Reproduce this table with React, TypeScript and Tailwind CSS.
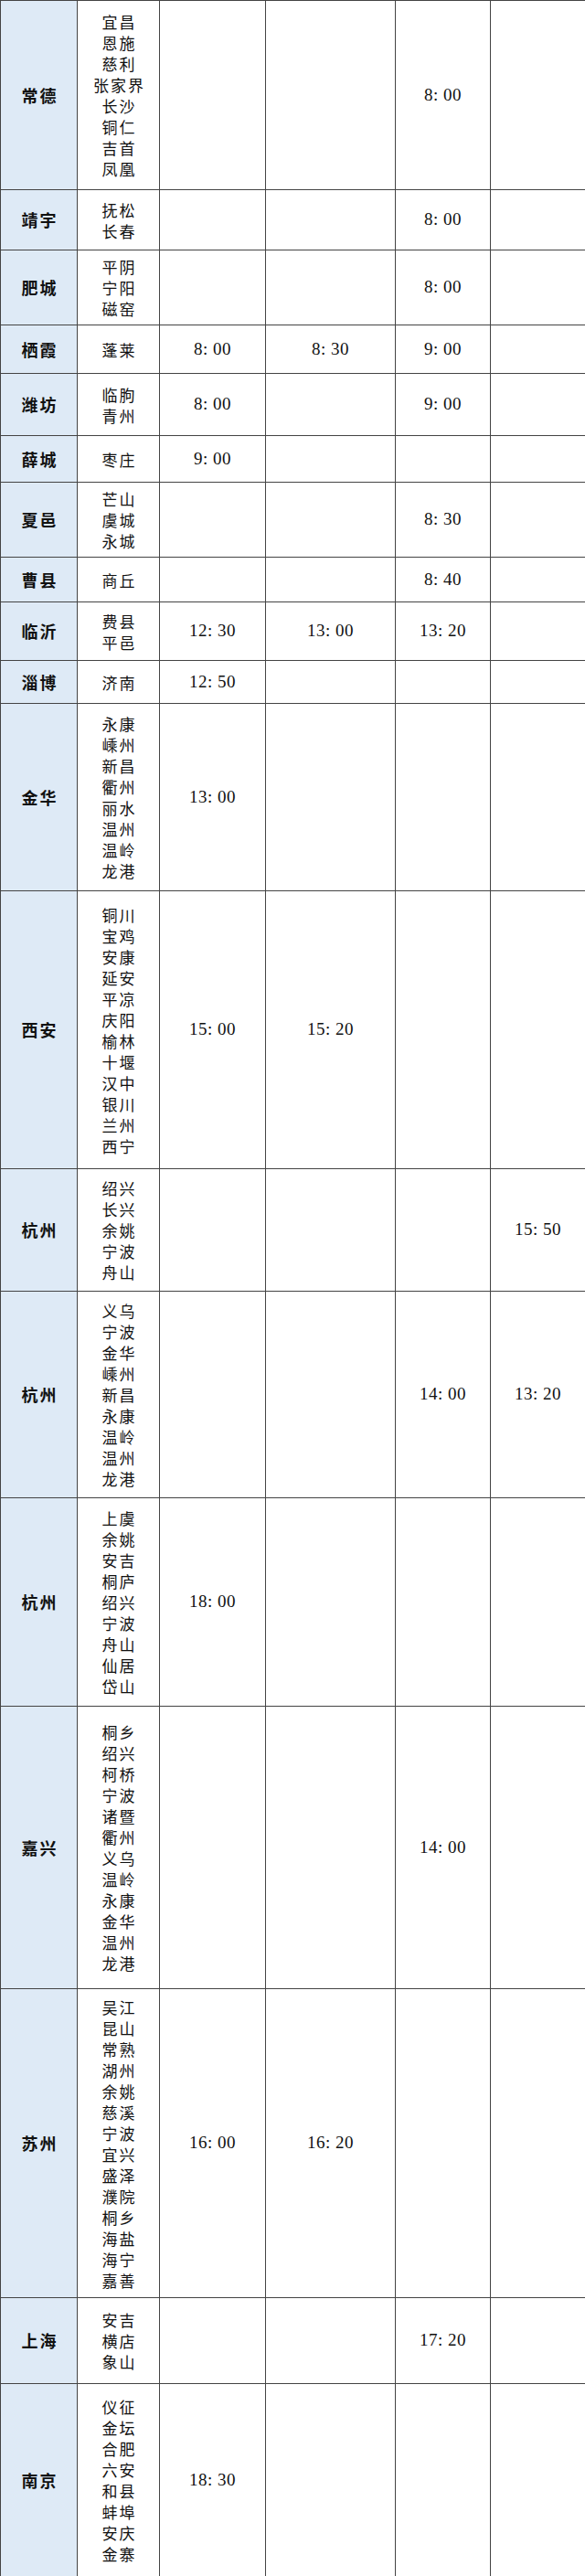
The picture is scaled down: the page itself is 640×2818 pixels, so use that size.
type Row = {
  city: string;
  h: string;
  stops: string[];
  times: [string, string, string, string];
};

const rows: Row[] = [
  { city: "常德", h: "h-[207px]", stops: ["宜昌", "恩施", "慈利", "张家界", "长沙", "铜仁", "吉首", "凤凰"], times: ["", "", "8: 00", ""] },
  { city: "靖宇", h: "h-[66px]", stops: ["抚松", "长春"], times: ["", "", "8: 00", ""] },
  { city: "肥城", h: "h-[82px]", stops: ["平阴", "宁阳", "磁窑"], times: ["", "", "8: 00", ""] },
  { city: "栖霞", h: "h-[53px]", stops: ["蓬莱"], times: ["8: 00", "8: 30", "9: 00", ""] },
  { city: "潍坊", h: "h-[68px]", stops: ["临朐", "青州"], times: ["8: 00", "", "9: 00", ""] },
  { city: "薛城", h: "h-[51px]", stops: ["枣庄"], times: ["9: 00", "", "", ""] },
  { city: "夏邑", h: "h-[82px]", stops: ["芒山", "虞城", "永城"], times: ["", "", "8: 30", ""] },
  { city: "曹县", h: "h-[49px]", stops: ["商丘"], times: ["", "", "8: 40", ""] },
  { city: "临沂", h: "h-[64px]", stops: ["费县", "平邑"], times: ["12: 30", "13: 00", "13: 20", ""] },
  { city: "淄博", h: "h-[47px]", stops: ["济南"], times: ["12: 50", "", "", ""] },
  { city: "金华", h: "h-[205px]", stops: ["永康", "嵊州", "新昌", "衢州", "丽水", "温州", "温岭", "龙港"], times: ["13: 00", "", "", ""] },
  { city: "西安", h: "h-[304px]", stops: ["铜川", "宝鸡", "安康", "延安", "平凉", "庆阳", "榆林", "十堰", "汉中", "银川", "兰州", "西宁"], times: ["15: 00", "15: 20", "", ""] },
  { city: "杭州", h: "h-[134px]", stops: ["绍兴", "长兴", "余姚", "宁波", "舟山"], times: ["", "", "", "15: 50"] },
  { city: "杭州", h: "h-[226px]", stops: ["义乌", "宁波", "金华", "嵊州", "新昌", "永康", "温岭", "温州", "龙港"], times: ["", "", "14: 00", "13: 20"] },
  { city: "杭州", h: "h-[228px]", stops: ["上虞", "余姚", "安吉", "桐庐", "绍兴", "宁波", "舟山", "仙居", "岱山"], times: ["18: 00", "", "", ""] },
  { city: "嘉兴", h: "h-[309px]", stops: ["桐乡", "绍兴", "柯桥", "宁波", "诸暨", "衢州", "义乌", "温岭", "永康", "金华", "温州", "龙港"], times: ["", "", "14: 00", ""] },
  { city: "苏州", h: "h-[338px]", stops: ["吴江", "昆山", "常熟", "湖州", "余姚", "慈溪", "宁波", "宜兴", "盛泽", "濮院", "桐乡", "海盐", "海宁", "嘉善"], times: ["16: 00", "16: 20", "", ""] },
  { city: "上海", h: "h-[94px]", stops: ["安吉", "横店", "象山"], times: ["", "", "17: 20", ""] },
  { city: "南京", h: "h-[211px]", stops: ["仪征", "金坛", "合肥", "六安", "和县", "蚌埠", "安庆", "金寨"], times: ["18: 30", "", "", ""] },
];

const cjk = "font-['Noto_Sans_CJK_SC','Noto_Sans',sans-serif]";

export default function App() {
  return (
    <div className="w-[640px] bg-white text-[#111]">
      <table className="w-[640px] table-fixed border-collapse">
        <colgroup>
          <col className="w-[84px]" />
          <col className="w-[90px]" />
          <col className="w-[116px]" />
          <col className="w-[142px]" />
          <col className="w-[104px]" />
          <col className="w-[104px]" />
        </colgroup>
        <tbody>
          {rows.map((row, i) => (
            <tr key={i} className={row.h}>
              <td className={`border border-[#444] bg-[#deeaf6] p-0 pl-[2px] text-center align-middle text-[18px] font-bold tracking-[2px] ${cjk}`}>
                {row.city}
              </td>
              <td className={`border border-[#444] p-0 pl-[2px] text-center align-middle text-[17px] leading-[23px] tracking-[2px] ${cjk}`}>
                {row.stops.map((s, j) => (
                  <div key={j}>{s}</div>
                ))}
              </td>
              {row.times.map((t, j) => (
                <td
                  key={j}
                  className="border border-[#444] p-0 text-center align-middle font-['Liberation_Serif',serif] text-[19px] tracking-[0.5px]"
                >
                  {t}
                </td>
              ))}
            </tr>
          ))}
        </tbody>
      </table>
    </div>
  );
}
